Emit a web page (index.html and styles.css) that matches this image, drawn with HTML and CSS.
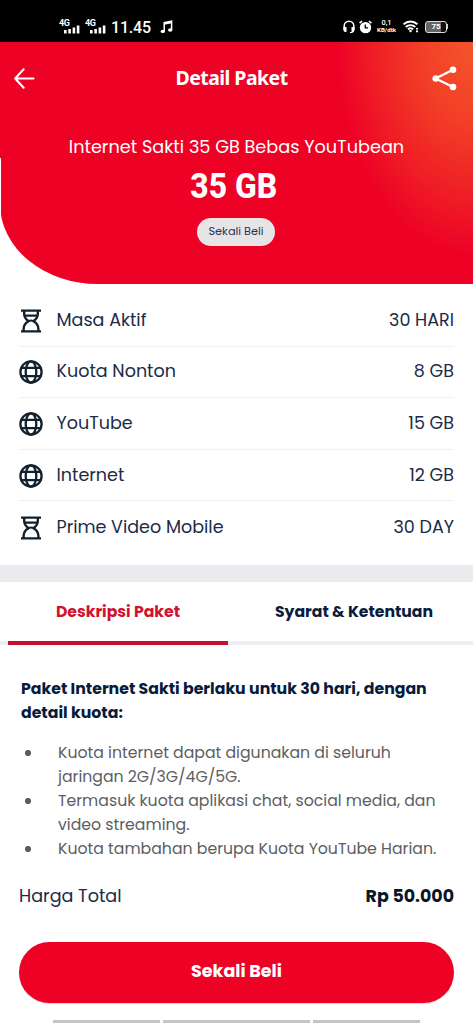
FILE: index.html
```html
<!DOCTYPE html>
<html lang="id">
<head>
<meta charset="utf-8">
<title>Detail Paket</title>
<link rel="stylesheet" href="styles.css">
</head>
<body>
<svg class="defs" width="0" height="0" aria-hidden="true">
  <symbol id="signal" viewBox="0 0 16 9"><path fill="#fff" d="M0 5h2.6v3.6H0zM4.3 4h2.6v4.6H4.3zM8.6 2.4h2.6v6.2H8.6zM12.8 .6h2.6v8h-2.6z"/></symbol>
  <symbol id="hourglass" viewBox="0 0 24 24"><g fill="none" stroke="currentColor" stroke-width="2.4"><path d="M2 1.6h20M2 22.4h20"/><path d="M5.2 1.5v3.6c0 3.6 1.6 5.2 4.2 7-2.6 1.8-4.8 3.8-4.8 8v2.5M18.8 1.5v3.6c0 3.6-1.6 5.2-4.2 7 2.6 1.8 4.8 3.8 4.8 8v2.5"/><path d="M5.2 6.6h13.6M8.4 12.9c2-1.7 5.2-1.7 7.2 0"/></g></symbol>
  <symbol id="globe" viewBox="0 0 24 24"><g fill="none" stroke="currentColor" stroke-width="2.3"><circle cx="12" cy="12" r="10.6"/><ellipse cx="12" cy="12" rx="5.3" ry="10.6"/><path d="M2.3 7.8h19.4M2.3 16.2h19.4"/></g></symbol>
</svg>
<div class="status">
  <div class="status-left">
    <div class="net"><span>4G</span><svg width="16" height="9"><use href="#signal"/></svg></div>
    <div class="net"><span>4G</span><svg width="16" height="9"><use href="#signal"/></svg></div>
    <span class="clock">11.45</span>
    <svg class="note" width="13" height="14" viewBox="0 0 13 14"><path d="M4.2 11.3V2.5l7.4-1.4v8.8M4.2 4l7.4-1.4" fill="none" stroke="#fff" stroke-width="1.5"/><ellipse cx="2.8" cy="11.4" rx="2.2" ry="1.7" fill="#fff"/><ellipse cx="10.2" cy="10" rx="2.2" ry="1.7" fill="#fff"/></svg>
  </div>
  <div class="status-right">
    <svg width="12" height="14" viewBox="0 0 12 14"><path d="M1.2 10V6a4.8 4.8 0 0 1 9.6 0v4" fill="none" stroke="#fff" stroke-width="1.5"/><path fill="#fff" d="M.5 7h3v5H2.2Q.5 12 .5 10zM8.5 7h3v3q0 2.2-2.4 3H7v-1.1h1.5z"/></svg>
    <svg class="alarm" width="13" height="14" viewBox="0 0 13 14"><circle cx="6.5" cy="7.6" r="5.7" fill="#fff"/><path d="M.6 3.2 3 1M12.4 3.2 10 1" stroke="#fff" stroke-width="1.6"/><path d="M6.3 4.5v3.4H9" fill="none" stroke="#000" stroke-width="1.3"/></svg>
    <div class="speed"><span>0,1</span><span>KB/dtk</span></div>
    <svg class="wifi" width="16" height="13" viewBox="0 0 16 13"><g fill="none" stroke="#fff" stroke-width="1.9"><path d="M.6 4.3a10 10 0 0 1 13.8 0M2.7 7a7 7 0 0 1 9.6 0M4.9 9.4a4 4 0 0 1 5.2 0"/></g><path d="m5.7 10.7 1.8 1.8 1.8-1.8q-1.8-1.2-3.6 0zM13 8h2v1.6h-2zM13 10.6h2v1.6h-2z" fill="#fff"/></svg>
    <div class="battery">75</div><i class="battery-tip"></i>
  </div>
</div>
<header class="hero">
  <div class="bar">
    <svg class="back" width="21" height="21" viewBox="0 0 21 21"><path d="M19.5 10.5H1.5M9.6 1.2 1.2 10.5l8.4 9.2" fill="none" stroke="#fff" stroke-width="2.1" stroke-linecap="round" stroke-linejoin="round"/></svg>
    <h1>Detail Paket</h1>
    <svg class="share" width="25" height="25" viewBox="0 0 25 25"><path d="M21 3.8 3.6 12.5 21 21" fill="none" stroke="#fff" stroke-width="2.3"/><g fill="#fff"><circle cx="21" cy="3.8" r="3.3"/><circle cx="3.7" cy="12.5" r="3.3"/><circle cx="21" cy="21" r="3.3"/></g></svg>
  </div>
  <p class="name">Internet Sakti 35 GB Bebas YouTubean</p>
  <p class="quota">35 GB</p>
  <span class="chip">Sekali Beli</span>
</header>
<ul class="benefits">
  <li><svg class="icon"><use href="#hourglass"/></svg><span class="label">Masa Aktif</span><span class="value">30 HARI</span></li>
  <li><svg class="icon"><use href="#globe"/></svg><span class="label">Kuota Nonton</span><span class="value">8 GB</span></li>
  <li><svg class="icon"><use href="#globe"/></svg><span class="label">YouTube</span><span class="value">15 GB</span></li>
  <li><svg class="icon"><use href="#globe"/></svg><span class="label">Internet</span><span class="value">12 GB</span></li>
  <li><svg class="icon"><use href="#hourglass"/></svg><span class="label">Prime Video Mobile</span><span class="value">30 DAY</span></li>
</ul>
<nav class="tabs">
  <span class="tab active">Deskripsi Paket</span>
  <span class="tab terms">Syarat &amp; Ketentuan</span>
</nav>
<section class="description">
  <h2>Paket Internet Sakti berlaku untuk 30 hari, dengan<br>detail kuota:</h2>
  <ul>
    <li>Kuota internet dapat digunakan di seluruh<br>jaringan 2G/3G/4G/5G.</li>
    <li>Termasuk kuota aplikasi chat, social media, dan<br>video streaming.</li>
    <li>Kuota tambahan berupa Kuota YouTube Harian.</li>
  </ul>
</section>
<div class="total"><span class="total-label">Harga Total</span><strong>Rp 50.000</strong></div>
<button class="buy">Sekali Beli</button>
<div class="gesture"><i></i><i class="wide"></i><i></i></div>
</body>
</html>
```
FILE: styles.css
```css
* { box-sizing: border-box; }
body {
  margin: 0;
  width: 473px;
  height: 1024px;
  overflow: hidden;
  display: flex;
  flex-direction: column;
  background: #fff;
  color: #1c2b47;
  font-family: Poppins, Inter, "Noto Sans", sans-serif;
}
h1, h2, p, ul { margin: 0; padding: 0; }
ul { list-style: none; }
svg { display: block; flex: none; }
.defs { position: absolute; }

.status {
  height: 42px;
  flex: none;
  background: #000;
  color: #fff;
  display: flex;
  justify-content: space-between;
  padding: 17px 26px 0 59px;
  font-family: Roboto, sans-serif;
}
.status-left, .status-right { display: flex; align-items: center; height: 19px; }
.net { width: 21px; margin-right: 5px; height: 16px; display: flex; flex-direction: column; }
.net span { font-size: 9px; line-height: 8px; font-weight: 700; letter-spacing: -.4px; }
.net svg { margin: -2px 0 0 5px; }
.clock { font-size: 16px; letter-spacing: -.2px; font-weight: 500; margin-top: 1px; }
.note { margin-left: 9px; }
.alarm { margin-left: 4px; }
.speed { width: 21px; margin-left: 4px; display: flex; flex-direction: column; align-items: center; font-size: 7.5px; line-height: 7.5px; font-weight: 500; }
.speed span + span { font-size: 6.2px; line-height: 7px; font-weight: 700; }
.wifi { margin-left: 6px; }
.battery {
  width: 22px; height: 12px; margin-left: 6px;
  border: 1.5px solid #ddd; border-radius: 3px;
  background: linear-gradient(90deg, #666 75%, #111 75%);
  font-size: 8px; line-height: 10px; font-weight: 700; text-align: center;
}
.battery-tip { width: 1px; height: 5px; background: #ccc; }
.status-right { margin-right: -1px; }

.hero {
  height: 242px;
  flex: none;
  display: flex;
  flex-direction: column;
  align-items: center;
  color: #fff;
  border-radius: 0 0 0 98px / 0 0 0 80px;
  background:
    linear-gradient(#fff, #fff) 0 116px / 1px 60px no-repeat,
    radial-gradient(ellipse 135px 212px at 100% 0, #f4552a 0%, #f23f27 38%, #ef1c25 75%, #ed0226 100%);
}
.bar { width: 100%; height: 72px; display: flex; align-items: center; justify-content: space-between; padding: 0 16px 0 14px; }
.bar h1 { font: 700 19.5px/28px "Noto Sans", sans-serif; letter-spacing: -.55px; margin-left: -4px; }
.name { margin-top: 18px; font-size: 17.7px; line-height: 30px; }
.quota { font: 800 35px/44px Roboto, sans-serif; margin: 3px 5px 0 0; transform: scaleX(.91); }
.chip {
  margin: 9px 1px 0 0; width: 78px; height: 28px; border-radius: 14px;
  background: #e7e4e6; color: #26345a; font-size: 11.3px; line-height: 27px; text-align: center;
}

.benefits { padding: 11px 19px 12px; height: 281px; flex: none; }
.benefits li { height: 51.6px; display: flex; align-items: center; border-bottom: 1.5px solid #f0f1f2; font-size: 17.55px; }
.benefits li:last-child { border-bottom: 0; }
.icon { width: 24px; height: 24px; margin-top: 1px; color: #13202d; }
.label { margin-left: 13.5px; }
.label, .value { margin-top: -1px; }
.value { margin-left: auto; }

.tabs {
  height: 80px; flex: none;
  border-top: 17px solid #e9ebee;
  padding: 0 8px;
  display: flex;
  background: linear-gradient(#eceeef, #eceeef) 0 100% / 100% 4px no-repeat;
}
.tab { width: 220px; height: 63px; line-height: 60px; text-align: center; font-weight: 700; font-size: 15.65px; color: #0b1c3d; }
.tab.active { color: #cf1231; border-bottom: 4px solid #c8102e; }
.terms { margin-left: 16px; }

.description { padding: 32px 21px 0; height: 229px; flex: none; font-size: 15.73px; line-height: 24px; color: #5c5e63; }
.description h2 { font-size: 15.73px; line-height: 24px; font-weight: 700; color: #071b3c; white-space: nowrap; }
.description ul { margin-top: 16px; }
.description li { padding-left: 37px; white-space: nowrap; background: radial-gradient(circle 3.3px at 7px 12px, #5c5e63 85%, transparent) no-repeat; }

.total { height: 44px; flex: none; padding: 0 19px; display: flex; justify-content: space-between; align-items: center; font-size: 17.6px; }
.total strong { color: #091626; font-weight: 700; font-size: 17.4px; }
.buy {
  margin: 24px 19px 0; height: 61px; flex: none; border: 0; border-radius: 31px;
  background: #ed0226; color: #fff; font: 700 17.5px/24px Poppins, Inter, sans-serif; padding: 0 0 4px;
  box-shadow: 0 1px 1px #0002;
}
.gesture { margin-top: 16.5px; display: flex; justify-content: center; gap: 3px; }
.gesture i { width: 107px; height: 3px; background: #c4c4c4; }
.gesture .wide { width: 147px; }
```
